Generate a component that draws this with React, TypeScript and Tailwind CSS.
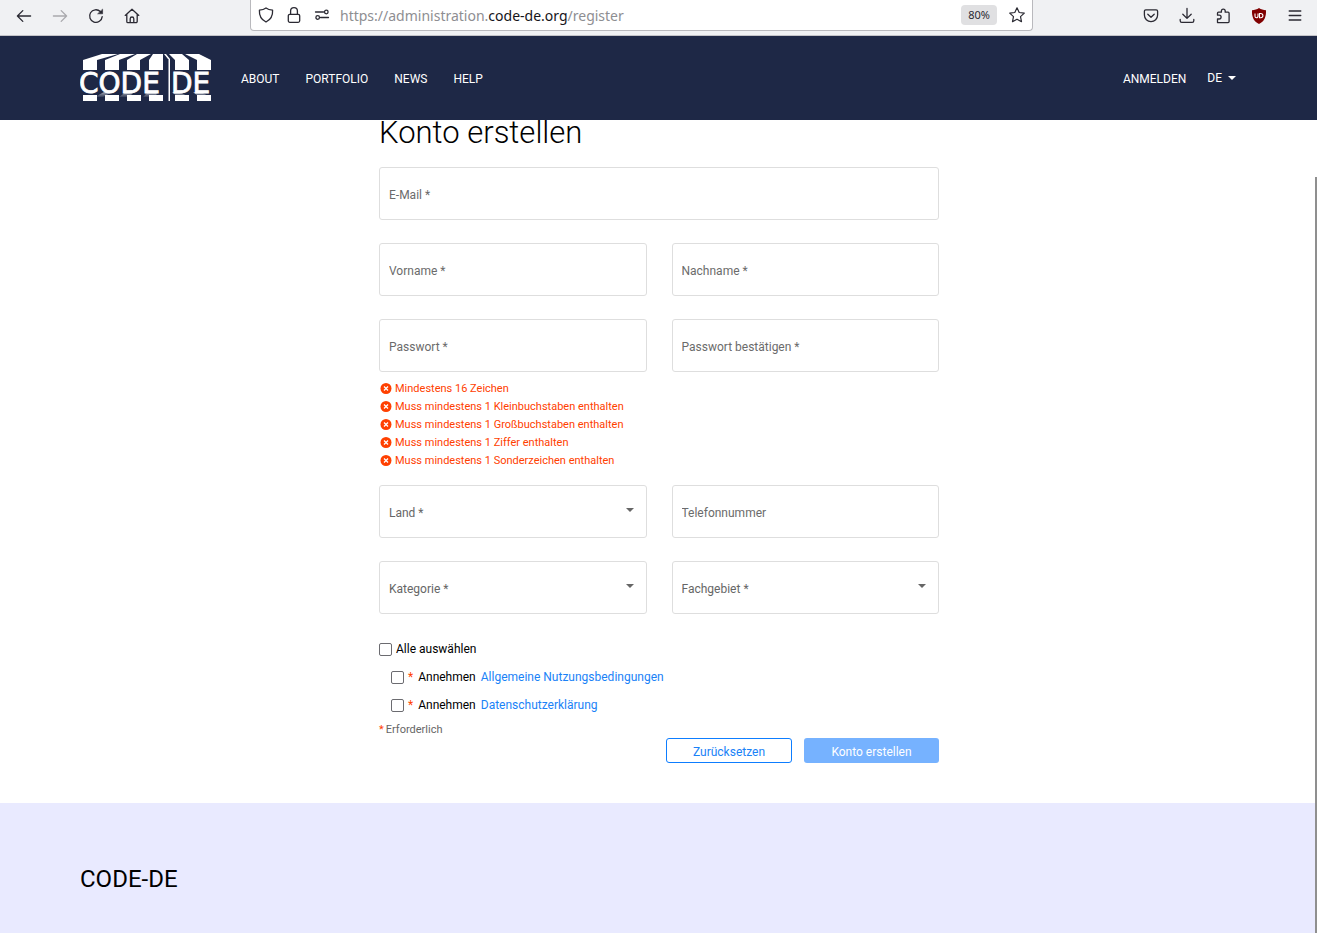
import React, { useId, useState } from "react";

function NavIcon({ label, dim, children }: { label: string; dim?: boolean; children: React.ReactNode }) {
  return (
    <button type="button" aria-label={label} disabled={dim} className="flex size-5 items-center justify-center text-[#2b2a33] disabled:text-[#a9a9ad]">
      <svg viewBox="0 0 16 16" className="size-4 overflow-visible" fill="none" stroke="currentColor" strokeWidth="1.3" strokeLinecap="round" strokeLinejoin="round" aria-hidden="true">
        {children}
      </svg>
    </button>
  );
}

function BrowserBar() {
  return (
    <header className="flex h-9 shrink-0 border-b border-[#c4c4c8] bg-[#f0f1f3]">
      <div className="flex h-8 w-[250px] shrink-0 items-center gap-4 pl-3.5">
        <NavIcon label="Back"><path d="M14.6 8H1.4M6.8 2.6 1.4 8l5.4 5.4" /></NavIcon>
        <NavIcon label="Forward" dim><path d="M1.4 8h13.2M9.2 2.6 14.6 8l-5.4 5.4" /></NavIcon>
        <NavIcon label="Reload">
          <path d="M14.2 8.6A6.3 6.3 0 1 1 12.3 3.5" />
          <path d="M14.6 1.5v4.3h-4.6z" fill="currentColor" strokeWidth="0.6" />
        </NavIcon>
        <NavIcon label="Home">
          <path d="M1.2 7.4 8 1.2l6.8 6.2M2.8 6.2v7.2a1.2 1.2 0 0 0 1.2 1.2h8a1.2 1.2 0 0 0 1.2-1.2V6.2M6.2 14.6v-3.8a1.8 1.8 0 0 1 3.6 0v3.8" />
        </NavIcon>
      </div>
      <div className="flex h-[31px] min-w-0 flex-1 items-center rounded-b border border-t-0 border-[#b9b9bd] bg-white pl-[5px]">
        <div className="flex gap-2">
          <NavIcon label="Tracking protection"><path d="M8 1c2 1.5 4.2 2 6.6 2.2.3 5-1.6 9.3-6.6 11.8C3 12.5 1.1 8.2 1.4 3.2 3.8 3 6 2.5 8 1z" /></NavIcon>
          <NavIcon label="Connection secure"><rect x="2.3" y="7.3" width="11.4" height="8" rx="1.5" /><path d="M4.6 7.3V4a3.4 3.4 0 0 1 6.8 0v3.3" /></NavIcon>
          <NavIcon label="Permissions"><path d="M1.5 5H9.5M6.5 10.5h8" /><circle cx="12.3" cy="5" r="1.8" /><circle cx="3.7" cy="10.5" r="1.8" /></NavIcon>
        </div>
        <p className="min-w-0 flex-1 truncate pt-0.5 pl-2 font-['Noto_Sans',sans-serif] text-sm text-[#8e8e92]">
          https://administration.<span className="text-[#15141a]">code-de.org</span>/register
        </p>
        <button type="button" className="mr-2.5 h-5 w-9 rounded-sm bg-[#e0e0e2] pt-px font-['Noto_Sans',sans-serif] text-[11px] text-[#2b2a33]">80%</button>
        <span className="mr-[5px] flex">
          <NavIcon label="Bookmark"><path d="m8 .8 2.2 4.7 5.1.6-3.8 3.5 1 5.1L8 12.2l-4.5 2.5 1-5.1L.7 6.1l5.1-.6z" strokeWidth="1.2" /></NavIcon>
        </span>
      </div>
      <div className="flex h-[31px] w-[284px] shrink-0 items-center justify-end gap-4 pr-3">
        <NavIcon label="Save"><path d="M2.8 1.8h10.4c.8 0 1.4.6 1.4 1.4V7a6.6 6.6 0 0 1-13.2 0V3.2c0-.8.6-1.4 1.4-1.4zM4.8 6.2 8 9.2l3.2-3" /></NavIcon>
        <NavIcon label="Downloads"><path d="M8 .4v9.800M3.8 6.2 8 10.4l4.2-4.2M1.2 11.4v1.400c0 1 .6 1.600 1.600 1.600h10.400c1 0 1.600-.6 1.600-1.600v-1.400" /></NavIcon>
        <NavIcon label="Extensions"><path d="M2.5 14.6V11h1.7a1.9 1.9 0 0 0 0-3.8H2.5V5.2c0-.6.4-1 1-1h2.9V3a1.9 1.9 0 0 1 3.8 0v1.2h2.9c.6 0 1 .4 1 1v8.4c0 .6-.4 1-1 1z" /></NavIcon>
        <button type="button" aria-label="Content blocker" className="flex size-5 items-center justify-center">
          <svg viewBox="0 0 16 16" className="size-4" aria-hidden="true">
            <path d="M8 0c2 1.5 4.5 2 7 2.2C15.2 8 14 13 8 16 2 13 .8 8 1 2.2 3.5 2 6 1.5 8 0z" fill="#800000" />
            <path d="M4 5.500v2.700a1.500 1.500 0 0 0 3 0V5.500M8.500 5.500v4.200h1.300a2.100 2.100 0 0 0 0-4.200z" fill="none" stroke="#fff" strokeWidth="1.1" />
          </svg>
        </button>
        <NavIcon label="Menu"><path d="M2.2 3h11.6M2.2 7.500h11.6M2.2 12h11.6" /></NavIcon>
      </div>
    </header>
  );
}

function Logo() {
  return (
    <svg viewBox="0 0 136 50" className="h-[50px] w-[136px]" role="img" aria-label="CODE-DE">
      <defs>
        <linearGradient id="ray" x1="0" y1="0" x2="0" y2="1">
          <stop offset="0" stopColor="#fff" stopOpacity="0.6" />
          <stop offset="1" stopColor="#fff" stopOpacity="0.1" />
        </linearGradient>
      </defs>
      <g fill="#fff">
        <path d="M3 17V7L22 1h16L17 7v10zM25 17V7L40 1h15L39 7v10zM47 17V7L57 1h14L60 7v10zM69 17V7l4-6h10v16zM95 17V7L89 1h13l7 6v10zM117 17V7l-12-6h14l12 6v10z" />
        <path d="M3 42h14v6H3zM25 42h14v6H25zM47 42h14v6H47zM69 42h14v6H69zM95 42h14v6H95zM117 42h14v6H117z" />
        <path d="M88.5 6h1.5v42h-1.5zM84 1h2l4 5h-2z" />
      </g>
      <path d="M24 39h8l-9 5H15zM46 39h8l-5 5H39zM68 39h9l-1 5H63zM92 39h8l9 5h-11zM113 39h8l9 5h-11z" fill="url(#ray)" />
      <g fill="#fff" stroke="#fff" strokeWidth="0.8" className="font-['DejaVu_Sans',sans-serif] text-[28px]">
        <text x="-1" y="40">CODE</text>
        <text x="91" y="40">DE</text>
      </g>
    </svg>
  );
}

function SiteHeader() {
  return (
    <div className="relative z-10 flex h-[84px] shrink-0 items-center bg-[#1e2846] px-20 text-xs text-white">
      <a href="#home" className="flex"><Logo /></a>
      <nav className="flex gap-[26px] pt-0.5 pl-[25px]">
        {["ABOUT", "PORTFOLIO", "NEWS", "HELP"].map((item) => (
          <a key={item} href={`#${item.toLowerCase()}`}>{item}</a>
        ))}
      </nav>
      <div className="ml-auto flex items-center gap-[21px] pr-px">
        <a href="#login" className="pt-0.5">ANMELDEN</a>
        <button type="button" className="flex items-center gap-1.5">
          DE
          <svg viewBox="0 0 8 4" className="h-1 w-2" aria-hidden="true"><path d="M0 0h8L4 4z" fill="#fff" /></svg>
        </button>
      </div>
    </div>
  );
}

const box = "h-[53px] w-full rounded-[3px] border border-[#dedede] bg-white px-[9px] pt-0.5 text-xs text-[#666]";

function TextField({ label, type = "text" }: { label: string; type?: string }) {
  return <input type={type} aria-label={label} placeholder={label} className={`${box} placeholder:text-[#6b6b6b]`} />;
}

function SelectField({ label }: { label: string }) {
  return (
    <div className="relative">
      <select aria-label={label} className={`${box} appearance-none`}>
        <option>{label}</option>
      </select>
      <svg viewBox="0 0 8 4" className="pointer-events-none absolute top-[23px] right-[13px] h-1 w-2" aria-hidden="true"><path d="M0 0h8L4 4z" fill="#666" /></svg>
    </div>
  );
}

function CheckRow({ label, link, checked, onChange }: { label: string; link?: string; checked: boolean; onChange: (v: boolean) => void }) {
  const id = useId();
  return (
    <div className={`flex h-7 items-center text-xs text-black ${link ? "pl-3" : ""}`}>
      <input id={id} type="checkbox" checked={checked} onChange={(e) => onChange(e.target.checked)} className="size-[13px] appearance-none rounded-[2px] border border-[#6b6b70] bg-white checked:bg-[#0d7dff]" />
      <label htmlFor={id} className="pl-1">
        {link && <span className="pr-[5px] text-[#ff4000]">*</span>}
        {label}
      </label>
      {link && <a href="#terms" className="pl-[5px] text-[#1a82f7]">{link}</a>}
    </div>
  );
}

const rules = [
  "Mindestens 16 Zeichen",
  "Muss mindestens 1 Kleinbuchstaben enthalten",
  "Muss mindestens 1 Großbuchstaben enthalten",
  "Muss mindestens 1 Ziffer enthalten",
  "Muss mindestens 1 Sonderzeichen enthalten",
];

function RegisterForm() {
  const [terms, setTerms] = useState(false);
  const [privacy, setPrivacy] = useState(false);
  const setAll = (v: boolean) => {
    setTerms(v);
    setPrivacy(v);
  };
  return (
    <form className="mx-auto w-full max-w-[560px] pb-10" onSubmit={(e) => e.preventDefault()}>
      <h1 className="-mt-[7px] pb-3.5 text-[31px] leading-10 font-light text-black">Konto erstellen</h1>
      <div className="grid grid-cols-2 gap-x-[25px] gap-y-[23px]">
        <div className="col-span-2 flex"><TextField label="E-Mail *" type="email" /></div>
        <TextField label="Vorname *" />
        <TextField label="Nachname *" />
        <TextField label="Passwort *" type="password" />
        <TextField label="Passwort bestätigen *" type="password" />
      </div>
      <ul className="pt-2 pb-[15px] text-[11px] leading-[18px] text-[#ff4000]">
        {rules.map((rule) => (
          <li key={rule} className="flex items-center gap-[3px] pl-px">
            <svg viewBox="0 0 12 12" className="size-3" aria-hidden="true">
              <circle cx="6" cy="5.5" r="5.5" fill="#ff4000" />
              <path d="m4 3.500 4 4M8 3.500 4 7.500" stroke="#fff" strokeWidth="1.3" />
            </svg>
            {rule}
          </li>
        ))}
      </ul>
      <div className="grid grid-cols-2 gap-x-[25px] gap-y-[23px]">
        <SelectField label="Land *" />
        <TextField label="Telefonnummer" type="tel" />
        <SelectField label="Kategorie *" />
        <SelectField label="Fachgebiet *" />
      </div>
      <div className="pt-[21px]">
        <CheckRow label="Alle auswählen" checked={terms && privacy} onChange={setAll} />
        <CheckRow label="Annehmen" link="Allgemeine Nutzungsbedingungen" checked={terms} onChange={setTerms} />
        <CheckRow label="Annehmen" link="Datenschutzerklärung" checked={privacy} onChange={setPrivacy} />
      </div>
      <p className="pt-0.5 text-[11px] leading-[17px] text-[#666]"><span className="pr-0.5 text-[#ff4000]">*</span>Erforderlich</p>
      <div className="flex justify-end gap-3 text-xs">
        <button type="reset" onClick={() => setAll(false)} className="h-[25px] w-[126px] rounded-[3px] border border-[#0d7dff] pt-0.5 text-[#1a82f7]">Zurücksetzen</button>
        <button type="submit" disabled className="h-[25px] w-[135px] rounded-[3px] bg-[#76b2ff] pt-0.5 text-white">Konto erstellen</button>
      </div>
    </form>
  );
}

export default function App() {
  return (
    <div className="flex h-screen flex-col overflow-hidden bg-white font-[Roboto,sans-serif]">
      <BrowserBar />
      <SiteHeader />
      <div className="relative flex min-h-0 flex-1 flex-col">
        <main className="shrink-0 pl-px"><RegisterForm /></main>
        <footer className="flex-1 bg-[#e9eaff] px-20 pt-[60px]">
          <h2 className="text-2xl text-black">CODE-DE</h2>
        </footer>
        <div className="absolute top-[57px] right-0 bottom-0 w-0.5 bg-[#8f8f8f]" />
      </div>
    </div>
  );
}
